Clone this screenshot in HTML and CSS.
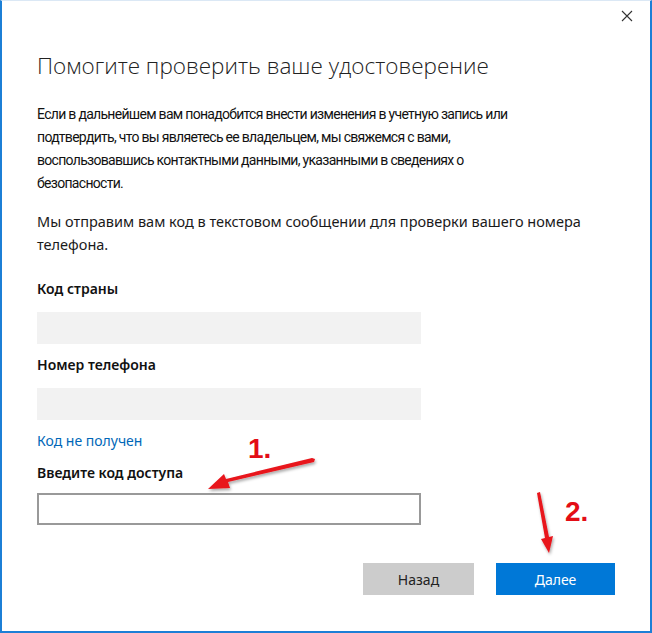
FILE: index.html
```html
<!DOCTYPE html>
<html lang="ru">
<head>
    <meta charset="UTF-8">
    <title>Помогите проверить ваше удостоверение</title>
    <link rel="stylesheet" href="styles.css">
</head>
<body>
    <div class="dialog">
        <div class="titlebar">
            <button class="close" aria-label="Закрыть">
                <svg width="12" height="12" viewBox="0 0 12 12"><path d="M1 1L11 11M11 1L1 11" stroke="#333" stroke-width="1.1" fill="none"/></svg>
            </button>
        </div>

        <div class="content">
            <h1 class="title">Помогите проверить ваше удостоверение</h1>

            <p class="text text-narrow">Если в дальнейшем вам понадобится внести изменения в учетную запись или подтвердить, что вы являетесь ее владельцем, мы свяжемся с вами, воспользовавшись контактными данными, указанными в сведениях о безопасности.</p>

            <p class="text text-sms">Мы отправим вам код в текстовом сообщении для проверки вашего номера телефона.</p>

            <div class="field">
                <label class="label">Код страны</label>
                <div class="input input-disabled"></div>
            </div>

            <div class="field">
                <label class="label">Номер телефона</label>
                <div class="input input-disabled"></div>
            </div>

            <a class="link" href="#">Код не получен</a>

            <div class="field">
                <label class="label">Введите код доступа</label>
                <input class="input input-code" type="text">
            </div>

            <div class="buttons">
                <button class="btn btn-back">Назад</button>
                <button class="btn btn-next">Далее</button>
            </div>
        </div>

        <!-- red instruction arrows drawn over the dialog -->
        <svg class="marks" width="652" height="633" viewBox="0 0 652 633">
            <defs>
                <filter id="shadow" x="-20%" y="-20%" width="140%" height="140%">
                    <feDropShadow dx="1" dy="2" stdDeviation="1.5" flood-color="#000" flood-opacity="0.35"/>
                </filter>
            </defs>
            <g filter="url(#shadow)" fill="#e8141b" stroke="none">
                <path d="M315 459 L314 462 L228 482 L230 488 L208 489 L224 474 L226 479 L312 458 Z"/>
                <path d="M537 493 L540 492 L549 537 L553 536 L549 553 L541 539 L545 538 Z"/>
            </g>
            <text class="mark-num" x="248" y="458">1.</text>
            <text class="mark-num" x="565" y="521">2.</text>
        </svg>
    </div>
</body>
</html>
```

FILE: styles.css
```css
html, body {
    margin: 0;
    padding: 0;
    background: #fff;
}

body {
    font-family: "Noto Sans", "Open Sans", sans-serif;
    color: #1a1a1a;
}

.dialog {
    position: relative;
    width: 652px;
    height: 633px;
    box-sizing: border-box;
    border-left: 2px solid #1c7fd6;
    border-right: 2px solid #1c7fd6;
    border-bottom: 2px solid #1c7fd6;
    border-top: 1px solid #dbe8f5;
    background: #fff;
}

.titlebar {
    display: flex;
    justify-content: flex-end;
    height: 30px;
}

.close {
    width: 46px;
    height: 30px;
    border: none;
    background: transparent;
    display: flex;
    align-items: center;
    justify-content: center;
    padding: 0;
}

.content {
    padding: 0 35px;
}

.title {
    margin: 20px 0 0;
    font-family: "Open Sans", sans-serif;
    font-weight: 300;
    font-size: 22.5px;
    line-height: 30px;
    color: #222;
}

.text {
    margin: 22px 0 0;
    font-size: 14px;
    line-height: 23px;
    color: #1a1a1a;
}

/* first paragraph is rendered in a tighter face in the original */
.text-narrow {
    max-width: 490px;
    font-family: "Roboto", sans-serif;
    font-size: 14px;
    letter-spacing: -0.7px;
    color: #111;
}

.text-sms {
    margin-top: 15px;
    font-size: 14.5px;
}

.field {
    display: flex;
    flex-direction: column;
}

.label {
    margin-top: 11px;
    font-size: 14px;
    font-weight: 600;
    line-height: 20px;
    color: #111;
}

.text + .field .label {
    margin-top: 23px;
}

.input {
    box-sizing: border-box;
    width: 384px;
    height: 32px;
    margin-top: 13px;
}

.input-disabled {
    background: #f2f2f2;
}

.input-code {
    border: 2px solid #999;
    background: #fff;
    margin-top: 10px;
    outline: none;
}

.link {
    display: block;
    margin-top: 11px;
    font-size: 14px;
    line-height: 20px;
    color: #0067b8;
    text-decoration: none;
}

.link + .field .label {
    margin-top: 12px;
}

.buttons {
    display: flex;
    justify-content: flex-end;
    gap: 22px;
    margin-top: 38px;
}

.btn {
    width: 111px;
    height: 32px;
    border: none;
    font-family: "Noto Sans", sans-serif;
    font-size: 14px;
}

.btn-back {
    background: #cccccc;
    color: #222;
}

.btn-next {
    width: 119px;
    background: #0078d7;
    color: #fff;
}

.marks {
    position: absolute;
    left: -2px;
    top: -1px;
    pointer-events: none;
}

.mark-num {
    font-family: "Liberation Sans", Arial, sans-serif;
    font-weight: 700;
    font-size: 28px;
    fill: #e30d16;
}
```
